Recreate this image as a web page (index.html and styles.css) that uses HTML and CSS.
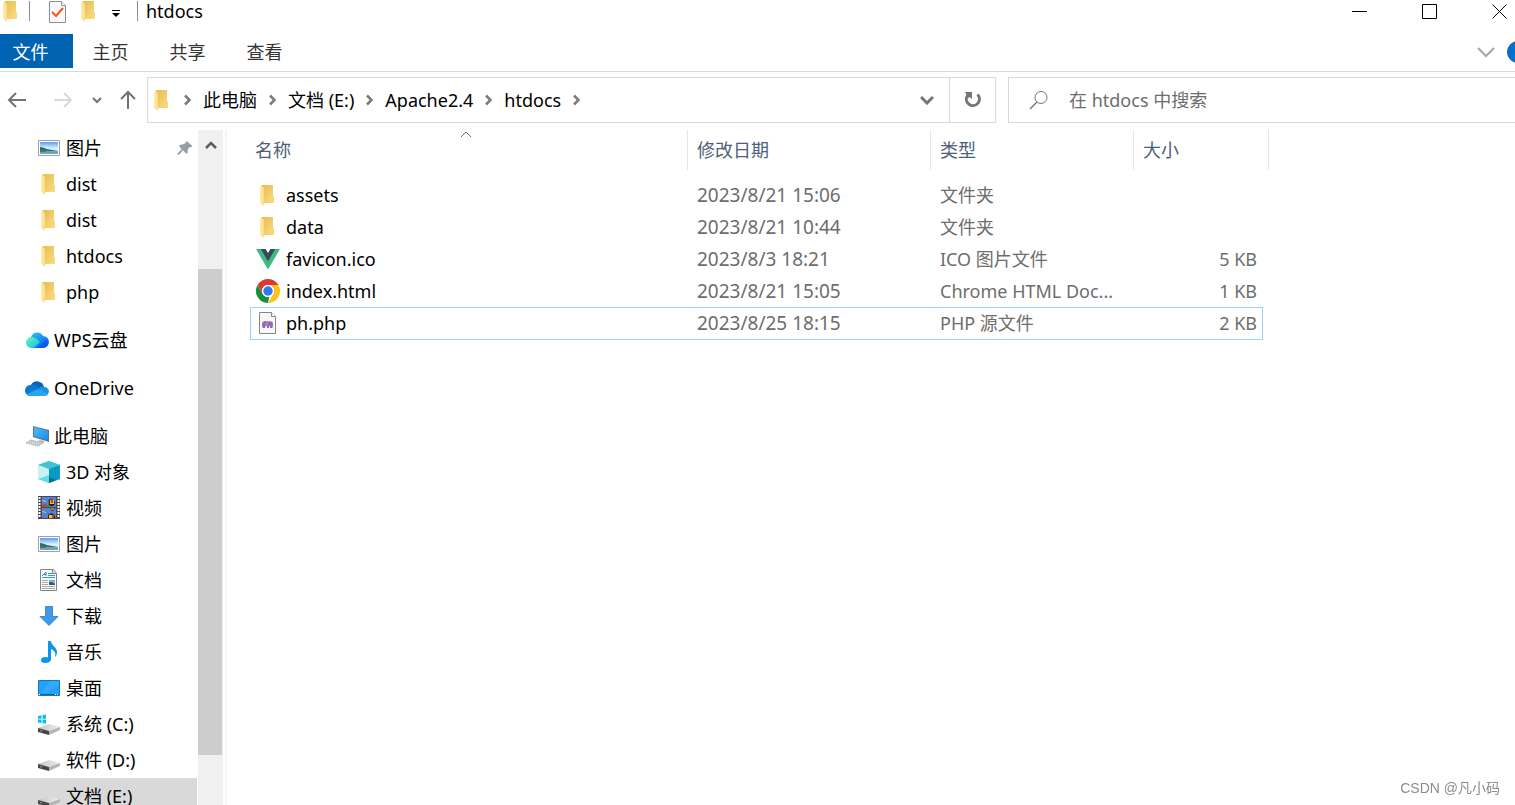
FILE: index.html
```html
<!DOCTYPE html>
<html lang="zh-CN">
<head>
  <meta charset="UTF-8">
  <meta name="viewport" content="width=device-width, initial-scale=1.0">
  <title>htdocs</title>
  <link rel="stylesheet" href="styles.css">
</head>
<body>
  <svg class="sprite" aria-hidden="true">
    <defs>
      <linearGradient id="g-flap" x1="0" y1="0" x2="1" y2="0"><stop offset="0" stop-color="#ffedae"/><stop offset="1" stop-color="#fbdc86"/></linearGradient>
      <linearGradient id="g-back" x1="0" y1="0" x2="1" y2="1"><stop offset="0" stop-color="#e6bb50"/><stop offset="1" stop-color="#fbdd83"/></linearGradient>
      <linearGradient id="g-sky" x1="0" y1="0" x2="0" y2="1"><stop offset="0" stop-color="#5b9bf0"/><stop offset=".5" stop-color="#d8f0fb"/></linearGradient>
      <linearGradient id="g-wps" x1="0" y1="0" x2="1" y2="1"><stop offset="0" stop-color="#5fffb0"/><stop offset="1" stop-color="#14b5ee"/></linearGradient>
      <linearGradient id="g-wps2" x1="0" y1="0" x2="0.6" y2="1"><stop offset="0" stop-color="#2cc4ff"/><stop offset="1" stop-color="#0a62ee"/></linearGradient>
      <linearGradient id="g-screen" x1="0" y1="0" x2="1" y2="1"><stop offset="0" stop-color="#4dbcff"/><stop offset="1" stop-color="#1590ee"/></linearGradient>
      <linearGradient id="g-disk" x1="0" y1="0" x2="1" y2="0"><stop offset="0" stop-color="#c4c6c8"/><stop offset="1" stop-color="#eceded"/></linearGradient>

      <symbol id="folder" viewBox="0 0 24 24">
        <path fill="url(#g-back)" d="M6 2h11v11l1 1v6H7z"/>
        <path fill="url(#g-flap)" d="M4 2l4 3v18l-4-3z"/>
      </symbol>
      <symbol id="picture" viewBox="0 0 24 24">
        <path fill="#fff" stroke="#a0a0a0" d="M1.500 4.500h21v15h-21z"/>
        <path fill="url(#g-sky)" d="M3 6h18v12H3z"/>
        <path fill="#3b6b52" d="M3 11c3 0 4 1 7 2 3 1 7 1 11 2H3z"/>
        <path fill="#6aa6c4" d="M3 15h18v3H3z"/>
        <path fill="#3f7488" d="M3 14h9l-4 2H3z"/>
      </symbol>
      <symbol id="wps" viewBox="0 0 24 24">
        <path fill="url(#g-wps2)" d="M6 9a6.500 6.500 0 0 1 12-1 6 6 0 0 1 0 12H8z"/>
        <path fill="#0a50e0" d="M13 20l8-9a6 6 0 0 1 2 4 5 5 0 0 1-5 5z" opacity=".6"/>
        <path fill="url(#g-wps)" d="M6 9c4 0 6 2 8 4l1 1-4 4c-1 1-2 2-4 2A5.500 5.500 0 0 1 6 9z"/>
      </symbol>
      <symbol id="onedrive" viewBox="0 0 24 24">
        <path fill="#0d61ba" d="M6 9a7 7 0 0 1 13 2l-6 4z"/>
        <path fill="#0c78d6" d="M5 9c4-1 6 1 9 3l-3 8H6A5.500 5.500 0 0 1 5 9z"/>
        <path fill="#1992e4" d="M13 13c2-2 4-3 6-2 3 0 5 2 5 5l-2 3z"/>
        <path fill="#29a7ee" d="M2 18l11-5 10 5c-1 2-3 2-4 2H6c-2 0-3-1-4-2z"/>
      </symbol>
      <symbol id="pc" viewBox="0 0 24 24">
        <path fill="#607788" d="M8 2l16 4v12L8 13z"/>
        <path fill="url(#g-screen)" d="M9 3l14 4v9L9 12z"/>
        <path fill="#a9b1b8" d="M15 16l4 1v2l-6-2z"/>
        <path fill="#d9dde0" stroke="#a4adb5" stroke-width=".7" d="M6 16l12 3-5 3-12-3z"/>
        <path fill="none" stroke="#8f9aa3" stroke-width=".7" stroke-dasharray="1 1" d="M4 18l11 3M6 17l11 2.500"/>
      </symbol>
      <symbol id="cube" viewBox="0 0 24 24">
        <path fill="#63d6e3" d="M12 1l11 4v14l-11 4-11-4V5z"/>
        <path fill="#43c2d3" d="M12 1l11 4-11 4L1 5z"/>
        <path fill="#c8f1f1" d="M1 5l11 4v10L1 19z"/>
        <path fill="#0899c8" d="M12 9l11-4v14l-11 4z"/>
        <path fill="#67dbe4" d="M1 19l11-4v8z"/>
        <path fill="#066f88" d="M12 17l7 3-7 3z"/>
      </symbol>
      <symbol id="video" viewBox="0 0 24 24">
        <path fill="#4a4a4a" d="M1 0h22v23H1z"/>
        <path fill="none" stroke="#fff" stroke-width="2" stroke-dasharray="2 1" d="M2.500 1v21M21.500 1v21"/>
        <path fill="#4f82d8" d="M5 1h14v10H5zM5 12h14v10H5z"/>
        <path fill="#222" d="M11 5q4-5 7 1l-1 4-5 0zM11 19q4-4 7 1v2h-7z"/>
        <path fill="#f2c32c" d="M13 4h4v4h-4zM5 4l4 1v1L5 5zM12 19h3v3h-3zM5 15l4 1v1l-4-1z"/>
        <path fill="#dd3333" d="M14 3h2v4h-2zM5 9l4-1 3 2v1H5zM15 19h2v3h-2z"/>
        <path fill="#35913e" d="M9 9h4v2H9zM11 5h1v3h-1z"/>
        <path fill="#222" d="M13 12h5l-2 3h-1z"/>
        <path fill="#e8662d" d="M14 12h3v2h-3z"/>
      </symbol>
      <symbol id="document" viewBox="0 0 24 24">
        <path fill="#fafafa" stroke="#858585" d="M3.500 1.500h13l3 4v17h-16z"/>
        <path fill="#ddd" stroke="#858585" d="M15.500 1.500v4h4"/>
        <path fill="none" stroke="#2b8dcb" d="M5 8l4-4v4M6.500 6.500h2.500"/>
        <path stroke="#2ba0e5" d="M11 5.500h4M11 7.500h7M5 9.500h13"/>
        <path stroke="#a9a9a9" d="M5 12.500h6M5 14.500h6M5 16.500h6M5 18.500h13M5 20.500h13"/>
        <path fill="#7eb4e0" d="M12 12h6v5h-6z"/>
        <path fill="#345c70" d="M12 14l3 0 3 2v1h-6z"/>
      </symbol>
      <symbol id="download" viewBox="0 0 24 24">
        <path fill="#3d9be9" stroke="#2579c2" stroke-width=".8" d="M8.500 2.500h7v10h5.500l-9 9-9-9h5.500z"/>
      </symbol>
      <symbol id="music" viewBox="0 0 24 24">
        <path fill="#0b98ea" d="M11 1h3c0 4 6 6 6 11 0 3-1 4-2 5 1-4 0-6-4-8v10c0 3-3 4-6 4-6 0-5-6 0-6 1 0 2 0 3 .5z"/>
      </symbol>
      <symbol id="desktop" viewBox="0 0 24 24">
        <path fill="#20a1fa" stroke="#1678bc" d="M1.500 4.500h21v15h-21z"/>
        <path fill="#48b4ff" d="M13 5h9v5L9 17H4z" opacity=".5"/>
        <path fill="#0b64a5" d="M2 18h20v1H2z"/>
        <path fill="#fff" d="M2 18h1v1H2zM18 18h1v1h-1zM20 18h1v1h-1z"/>
      </symbol>
      <symbol id="disk" viewBox="0 0 24 24">
        <path fill="url(#g-disk)" d="M1 16l11-4 11 3-11 6z"/>
        <path fill="#464646" d="M1 16l11 3v4L1 20z"/>
        <path fill="#b3b5b7" d="M12 19l11-4v3l-11 5z"/>
        <path fill="#56c98a" d="M3 18l2 .6v1l-2-.6z"/>
      </symbol>
      <symbol id="sysdisk" viewBox="0 0 24 24">
        <use href="#disk"/>
        <path fill="#08bdf2" d="M1 4l3.500-.7v3.400H1zM5.500 3.200L9 2.500v4.200H5.500zM1 7.500h3.500V11L1 10.500zM5.500 7.500H9v4.200L5.500 11z"/>
      </symbol>
      <symbol id="vue" viewBox="0 0 24 24">
        <path fill="#41b883" d="M0 2h9.500L12 6.300 14.500 2H24L12 22.500z"/>
        <path fill="#35495e" d="M4.800 2h4.700L12 6.300 14.500 2h4.700L12 14.300z"/>
      </symbol>
      <symbol id="chrome" viewBox="0 0 24 24">
        <path fill="#dd3a2e" d="M1.600 6A12 12 0 0 1 22.400 6H12a6 6 0 0 0-5.200 9z"/>
        <path fill="#1e8e3e" d="M1.600 6l5.200 9a6 6 0 0 0 6.500 2.900L12 24A12 12 0 0 1 1.600 6z"/>
        <path fill="#fcc31e" d="M22.400 6A12 12 0 0 1 12 24l5.200-9a6 6 0 0 0-5.200-9z"/>
        <circle cx="12" cy="12" r="6" fill="#fff"/>
        <circle cx="12" cy="12" r="4.700" fill="#3079f0"/>
      </symbol>
      <symbol id="php" viewBox="0 0 24 24">
        <path fill="#f8f8f8" stroke="#858585" d="M3.500 1.500h12l4 4v17h-16z"/>
        <path fill="#fff" stroke="#858585" d="M15.500 1.500v4h4"/>
        <path fill="#9269b4" d="M6 13q0-3 4-3 1 0 2 .5 5-1 5 2.500l-.5 4H14v-2h-1v2h-2v-2l-2 .5V17H7q-1-1-1-4z"/>
        <path fill="none" stroke="#cdb6de" stroke-width=".7" d="M11 11v3H9"/>
      </symbol>
      <symbol id="check-page" viewBox="0 0 24 24">
        <path fill="#f8f9fa" stroke="#8b9096" d="M4.500 2.500h12l4 4v17h-16z"/>
        <path fill="#fff" stroke="#8b9096" d="M16.500 2.500v4h4"/>
        <path fill="none" stroke="#f15a16" stroke-width="2" d="M7 13l4 4 7-8"/>
      </symbol>
      <symbol id="pin" viewBox="0 0 24 24">
        <path fill="#929ea8" d="M14 1l9 8-2 2-2-.5-3 4v5l-2 1-5-5-6 6.500H1V20l6-6-4-5 2-2 5-.5 4-3z"/>
      </symbol>
      <symbol id="chevron" viewBox="0 0 12 12">
        <path fill="none" stroke="#7a7a7a" stroke-width="2.500" d="M3 1.500L7.500 6 3 10.500"/>
      </symbol>
    </defs>
  </svg>

  <header class="titlebar">
    <svg class="icon"><use href="#folder"/></svg>
    <span class="divider"></span>
    <button class="quick" aria-label="属性"><svg class="icon"><use href="#check-page"/></svg></button>
    <button class="quick" aria-label="新建文件夹"><svg class="icon"><use href="#folder"/></svg></button>
    <button class="quick more" aria-label="自定义快速访问工具栏">
      <svg width="10" height="10" viewBox="0 0 10 10"><path d="M1 1.500h8" stroke="#000"/><path d="M1 4h8L5 8z"/></svg>
    </button>
    <span class="divider"></span>
    <h1>htdocs</h1>
    <div class="window-buttons">
      <button aria-label="最小化"><svg width="16" height="16"><path d="M0 8.500h15" stroke="#000"/></svg></button>
      <button aria-label="最大化"><svg width="16" height="16"><path d="M.5 1.500h14v14H.5z" fill="none" stroke="#000"/></svg></button>
      <button aria-label="关闭"><svg width="16" height="16"><path d="M.5 1.500l14 14M14.500 1.500l-14 14" stroke="#000"/></svg></button>
    </div>
  </header>

  <nav class="ribbon">
    <button class="tab file">文件</button>
    <button class="tab">主页</button>
    <button class="tab">共享</button>
    <button class="tab">查看</button>
    <div class="ribbon-end">
      <button aria-label="展开功能区"><svg width="18" height="12"><path d="M1 2l8 8 8-8" fill="none" stroke="#a6a6a6" stroke-width="2"/></svg></button>
      <button class="help" aria-label="帮助"></button>
    </div>
  </nav>

  <div class="toolbar">
    <div class="history">
      <button aria-label="后退"><svg width="20" height="16"><path d="M19 8H2M9 1L2 8l7 7" fill="none" stroke="#737373" stroke-width="2"/></svg></button>
      <button aria-label="前进"><svg width="20" height="16"><path d="M1 8h17M11 1l7 7-7 7" fill="none" stroke="#d9d9d9" stroke-width="2"/></svg></button>
      <button class="recent" aria-label="最近浏览的位置"><svg width="10" height="8"><path d="M1 2l4 4 4-4" fill="none" stroke="#737373" stroke-width="2"/></svg></button>
      <button aria-label="向上"><svg width="16" height="20"><path d="M8 19V2M1 9l7-7 7 7" fill="none" stroke="#737373" stroke-width="2"/></svg></button>
    </div>
    <div class="address">
      <svg class="icon"><use href="#folder"/></svg>
      <svg class="chev"><use href="#chevron"/></svg>
      <a href="#">此电脑</a>
      <svg class="chev"><use href="#chevron"/></svg>
      <a href="#">文档 (E:)</a>
      <svg class="chev"><use href="#chevron"/></svg>
      <a href="#">Apache2.4</a>
      <svg class="chev"><use href="#chevron"/></svg>
      <a href="#">htdocs</a>
      <svg class="chev"><use href="#chevron"/></svg>
      <button class="drop" aria-label="以前的位置"><svg width="14" height="10"><path d="M1 2l6 6 6-6" fill="none" stroke="#767676" stroke-width="3"/></svg></button>
      <button class="refresh" aria-label="刷新"><svg width="18" height="18"><path d="M13.500 3.500A6.500 6.500 0 1 1 3.500 4.500" fill="none" stroke="#767676" stroke-width="3"/><path d="M1 1h7v7L5.500 6 4 7z" fill="#767676"/></svg></button>
    </div>
    <label class="search">
      <svg width="20" height="20"><circle cx="12" cy="7.500" r="6" fill="none" stroke="#777"/><path d="M8 12l-7 7" stroke="#777" stroke-width="1.500"/></svg>
      <input type="text" placeholder="在 htdocs 中搜索" aria-label="在 htdocs 中搜索">
    </label>
  </div>

  <div class="content">
    <nav class="sidebar">
      <ul class="tree">
        <li class="sub"><a href="#"><svg class="icon"><use href="#picture"/></svg>图片<svg class="pin"><use href="#pin"/></svg></a></li>
        <li class="sub"><a href="#"><svg class="icon"><use href="#folder"/></svg>dist</a></li>
        <li class="sub"><a href="#"><svg class="icon"><use href="#folder"/></svg>dist</a></li>
        <li class="sub"><a href="#"><svg class="icon"><use href="#folder"/></svg>htdocs</a></li>
        <li class="sub"><a href="#"><svg class="icon"><use href="#folder"/></svg>php</a></li>
        <li class="root"><a href="#"><svg class="icon"><use href="#wps"/></svg>WPS云盘</a></li>
        <li class="root"><a href="#"><svg class="icon"><use href="#onedrive"/></svg>OneDrive</a></li>
        <li class="root"><a href="#"><svg class="icon"><use href="#pc"/></svg>此电脑</a></li>
        <li class="sub"><a href="#"><svg class="icon"><use href="#cube"/></svg>3D 对象</a></li>
        <li class="sub"><a href="#"><svg class="icon"><use href="#video"/></svg>视频</a></li>
        <li class="sub"><a href="#"><svg class="icon"><use href="#picture"/></svg>图片</a></li>
        <li class="sub"><a href="#"><svg class="icon"><use href="#document"/></svg>文档</a></li>
        <li class="sub"><a href="#"><svg class="icon"><use href="#download"/></svg>下载</a></li>
        <li class="sub"><a href="#"><svg class="icon"><use href="#music"/></svg>音乐</a></li>
        <li class="sub"><a href="#"><svg class="icon"><use href="#desktop"/></svg>桌面</a></li>
        <li class="sub"><a href="#"><svg class="icon"><use href="#sysdisk"/></svg>系统 (C:)</a></li>
        <li class="sub"><a href="#"><svg class="icon"><use href="#disk"/></svg>软件 (D:)</a></li>
        <li class="sub current"><a href="#"><svg class="icon"><use href="#disk"/></svg>文档 (E:)</a></li>
      </ul>
      <div class="scrollbar">
        <button class="scroll-up" aria-label="向上滚动"><svg width="12" height="10"><path d="M1 8l5-5 5 5" fill="none" stroke="#5c5c5c" stroke-width="2.500"/></svg></button>
        <div class="track"><div class="thumb"></div></div>
      </div>
    </nav>

    <main class="files">
      <table>
        <colgroup>
          <col class="col-name">
          <col class="col-date">
          <col class="col-type">
          <col class="col-size">
          <col class="col-edge">
        </colgroup>
        <thead>
          <tr>
            <th>
              <svg class="sort" width="12" height="7"><path d="M1 6l5-5 5 5" fill="none" stroke="#666"/></svg>
              名称
            </th>
            <th>修改日期</th>
            <th>类型</th>
            <th colspan="2">大小</th>
          </tr>
        </thead>
        <tbody>
          <tr>
            <td><a href="#"><svg class="icon"><use href="#folder"/></svg>assets</a></td>
            <td class="date">2023/8/21 15:06</td><td>文件夹</td><td></td><td class="edge"></td>
          </tr>
          <tr>
            <td><a href="#"><svg class="icon"><use href="#folder"/></svg>data</a></td>
            <td class="date">2023/8/21 10:44</td><td>文件夹</td><td></td><td class="edge"></td>
          </tr>
          <tr>
            <td><a href="#"><svg class="icon"><use href="#vue"/></svg>favicon.ico</a></td>
            <td class="date">2023/8/3 18:21</td><td>ICO 图片文件</td><td>5 KB</td><td class="edge"></td>
          </tr>
          <tr>
            <td><a href="#"><svg class="icon"><use href="#chrome"/></svg>index.html</a></td>
            <td class="date">2023/8/21 15:05</td><td>Chrome HTML Doc...</td><td>1 KB</td><td class="edge"></td>
          </tr>
          <tr class="focused">
            <td><a href="#"><svg class="icon"><use href="#php"/></svg>ph.php</a></td>
            <td class="date">2023/8/25 18:15</td><td>PHP 源文件</td><td>2 KB</td><td class="edge"></td>
          </tr>
        </tbody>
      </table>
    </main>
  </div>

  <div class="watermark">CSDN @凡小码</div>
</body>
</html>
```

FILE: styles.css
```css
* {
  box-sizing: border-box;
}
body {
  margin: 0;
  height: 100vh;
  display: flex;
  flex-direction: column;
  overflow: hidden;
  background: #fff;
  color: #000;
  font-family: "Noto Sans", "Noto Sans CJK SC", sans-serif;
  font-size: 18px;
  line-height: 24px;
}
button {
  padding: 0;
  border: none;
  background: none;
  font: inherit;
  color: inherit;
  display: flex;
  align-items: center;
  justify-content: center;
}
a {
  color: inherit;
  text-decoration: none;
}
svg {
  flex: none;
}
.sprite {
  position: absolute;
  width: 0;
  height: 0;
}
.icon {
  width: 24px;
  height: 24px;
}

/* title bar */
.titlebar {
  display: flex;
  align-items: center;
  height: 22px;
  margin-bottom: 12px;
}
.titlebar > .icon {
  margin-left: -1px;
}
.divider {
  width: 1px;
  height: 20px;
  margin: 0 15px 0 6px;
  background: #8c8c8c;
}
.titlebar .quick {
  margin-right: 8px;
}
.titlebar .more {
  width: 14px;
  height: 22px;
  padding-top: 6px;
}
.titlebar .more + .divider {
  margin: 0 8px 0 6px;
}
.titlebar h1 {
  margin: 0;
  font-size: 18px;
  font-weight: 400;
}
.window-buttons {
  display: flex;
  margin: 0 -20px 0 auto;
}
.window-buttons button {
  width: 70px;
  height: 22px;
}

/* ribbon */
.ribbon {
  display: flex;
  height: 38px;
  border-bottom: 1px solid #dadada;
  color: #333;
}
.tab {
  width: 77px;
  height: 34px;
  padding: 2px 2px 0 0;
}
.tab.file {
  width: 73px;
  padding-right: 12px;
  background: #0063b1;
  color: #fff;
}
.ribbon-end {
  display: flex;
  align-items: center;
  gap: 12px;
  height: 36px;
  margin: 0 -14px 0 auto;
}
.help {
  width: 22px;
  height: 22px;
  border: 1px solid #1d5c99;
  border-radius: 50%;
  background: #0570cf;
}

/* navigation and address */
.toolbar {
  display: flex;
  height: 46px;
  margin: 5px 0 7px;
}
.history {
  display: flex;
  align-items: center;
  gap: 18px;
  width: 147px;
  padding-left: 7px;
}
.history button:nth-child(2) {
  margin-left: 8px;
}
.history .recent {
  margin-left: 1px;
}
.address {
  flex: 1;
  display: flex;
  align-items: center;
  border: 1px solid #d9d9d9;
}
.address .icon {
  margin: 0 8px 0 2px;
}
.chev {
  width: 12px;
  height: 12px;
}
.address a {
  margin: 0 10px 0 9px;
}
.drop {
  width: 45px;
  height: 44px;
  margin-left: auto;
}
.refresh {
  width: 46px;
  height: 44px;
  border-left: 1px solid #d9d9d9;
}
.search {
  display: flex;
  align-items: center;
  gap: 20px;
  width: 507px;
  margin-left: 12px;
  padding-left: 20px;
  border: 1px solid #d9d9d9;
  border-right: none;
}
.search input {
  flex: 1;
  padding: 0;
  border: none;
  outline: none;
  font: inherit;
}
.search input::placeholder {
  color: #6d6d6d;
}

/* main area */
.content {
  flex: 1;
  display: flex;
  min-height: 0;
}
.sidebar {
  display: flex;
  width: 227px;
  border-right: 2px solid #f5f5f5;
  overflow: hidden;
}
.tree {
  flex: 1;
  margin: 0 1px 0 0;
  padding: 0;
  list-style: none;
}
.tree a {
  display: flex;
  align-items: center;
  gap: 5px;
  height: 36px;
  padding: 0 4px 0 37px;
}
.tree .root {
  margin-top: 12px;
}
.tree .root a {
  padding-left: 25px;
}
.tree .current {
  background: #d9d9d9;
}
.pin {
  width: 16px;
  height: 16px;
  margin-left: auto;
}
.scrollbar {
  display: flex;
  flex-direction: column;
  width: 25px;
  margin-right: 2px;
  background: #f0f0f0;
}
.scroll-up {
  height: 30px;
}
.track {
  flex: 1;
  padding-top: 109px;
}
.thumb {
  width: 24px;
  height: 486px;
  background: #cdcdcd;
}

/* file list */
.files {
  flex: 1;
  padding-left: 23px;
}
table {
  width: 1019px;
  table-layout: fixed;
  border-collapse: separate;
  border-spacing: 0;
}
.col-name {
  width: 438px;
}
.col-date {
  width: 243px;
}
.col-type {
  width: 203px;
}
.col-size {
  width: 129px;
}
.col-edge {
  width: 6px;
}
th {
  position: relative;
  height: 40px;
  padding: 0 0 0 9px;
  border-right: 1px solid #e5e5e5;
  color: #4c607a;
  font-weight: 400;
  text-align: left;
}
th:first-child {
  padding-left: 5px;
}
.sort {
  position: absolute;
  top: 1px;
  left: 210px;
}
tbody::before {
  content: "";
  display: block;
  height: 9px;
}
td {
  height: 32px;
  padding: 0 0 0 9px;
  color: #6d6d6d;
  white-space: nowrap;
}
td:first-child {
  padding-left: 6px;
  color: #000;
}
td:nth-child(4) {
  padding-right: 6px;
  text-align: right;
}
td.date {
  font-size: 19px;
}
td a {
  display: flex;
  align-items: center;
  gap: 6px;
}
.focused td {
  height: 33px;
  padding-bottom: 2px;
  border: 1px solid #99d1ff;
  border-width: 1px 0;
}
.focused td:first-child {
  padding-left: 5px;
  border-left-width: 1px;
}
.focused td:nth-child(4) {
  padding-right: 5px;
  border-right-width: 1px;
}
.focused .edge {
  border: none;
}
td.edge {
  padding: 0;
}

.watermark {
  position: fixed;
  right: 15px;
  bottom: 5px;
  color: #8c8c8c;
  font-family: "Liberation Sans", "Noto Sans CJK SC", sans-serif;
  font-size: 14px;
}
```
